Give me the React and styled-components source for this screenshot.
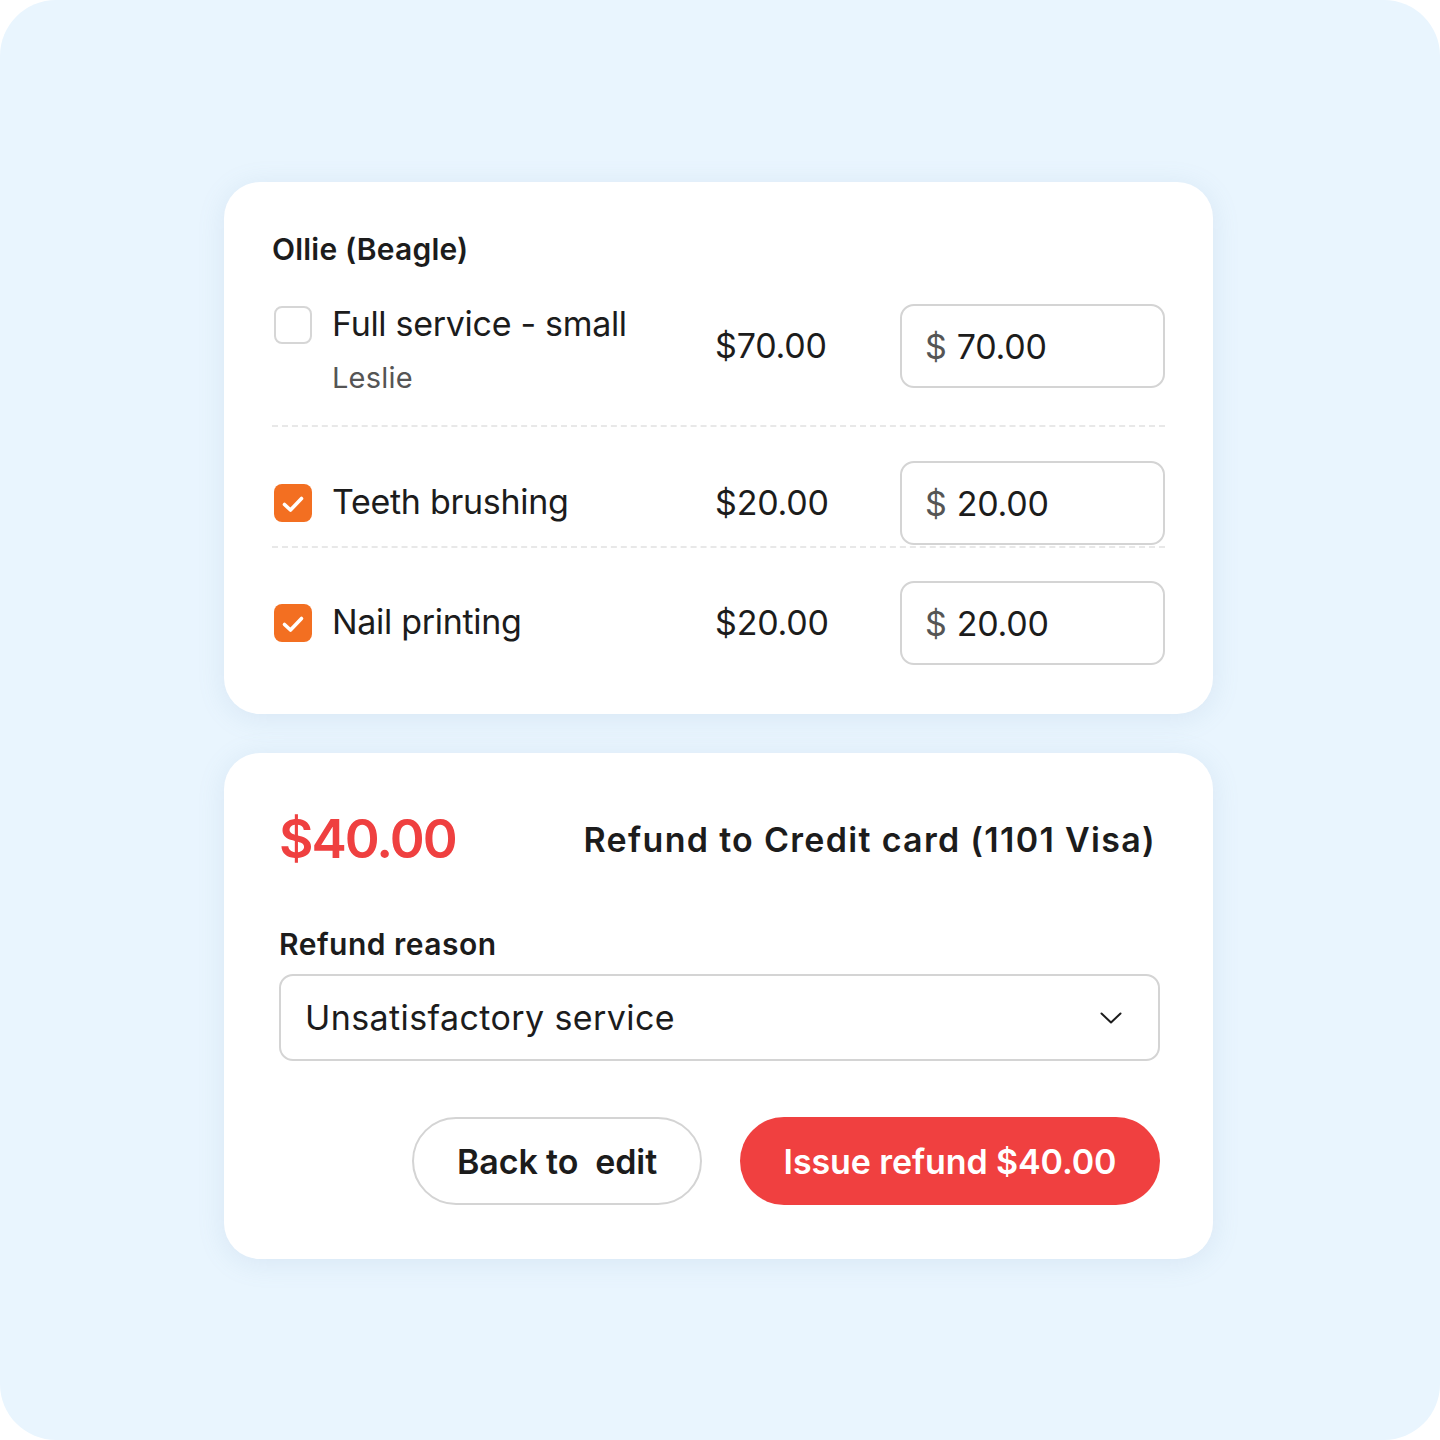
import React, { useState } from "react";
import styled, { createGlobalStyle } from "styled-components";

const GlobalStyle = createGlobalStyle`
  * { box-sizing: border-box; }
  body {
    margin: 0;
    background: #ffffff;
    font-family: Inter, "Noto Sans", sans-serif;
    color: #1c1c1c;
  }
`;

const services = [
  { id: 1, name: "Full service - small", staff: "Leslie", price: "70.00", checked: false },
  { id: 2, name: "Teeth brushing", price: "20.00", checked: true },
  { id: 3, name: "Nail printing", price: "20.00", checked: true },
];

function CheckIcon() {
  return (
    <svg width="38" height="38" viewBox="0 0 38 38" fill="none">
      <path d="M10.5 20.5L16.5 26L27.5 14.5" stroke="#fff" strokeWidth="3.6" strokeLinecap="round" strokeLinejoin="round" />
    </svg>
  );
}

function Chevron() {
  return (
    <svg width="22" height="12" viewBox="0 0 22 12" fill="none">
      <path d="M1.5 1.5L11 10.5L20.5 1.5" stroke="#1c1c1c" strokeWidth="2" strokeLinecap="round" strokeLinejoin="round" />
    </svg>
  );
}

function App() {
  const [items, setItems] = useState(services);
  const toggle = (id) =>
    setItems(items.map((it) => (it.id === id ? { ...it, checked: !it.checked } : it)));

  return (
    <>
      <GlobalStyle />
      <Frame>
        <Card $pad="49px 48px 49px">
          <PetTitle>Ollie (Beagle)</PetTitle>
          {items.map((it, i) => (
            <ServiceRow key={it.id} $first={i === 0} $last={i === items.length - 1}>
              <NameCell $center={!it.staff}>
                <Box $checked={it.checked} onClick={() => toggle(it.id)}>
                  {it.checked && <CheckIcon />}
                </Box>
                <div>
                  <ServiceName>{it.name}</ServiceName>
                  {it.staff && <Staff>{it.staff}</Staff>}
                </div>
              </NameCell>
              <Price>${it.price}</Price>
              <AmountInput>
                <Dollar>$</Dollar>
                <span>{it.price}</span>
              </AmountInput>
            </ServiceRow>
          ))}
        </Card>

        <Card $pad="54px 53px 54px 55px">
          <SummaryRow>
            <Total>$40.00</Total>
            <RefundTo>Refund to Credit card (1101 Visa)</RefundTo>
          </SummaryRow>
          <Label>Refund reason</Label>
          <Select>
            <span>Unsatisfactory service</span>
            <Chevron />
          </Select>
          <Actions>
            <Button>Back to&nbsp; edit</Button>
            <Button $primary>Issue refund $40.00</Button>
          </Actions>
        </Card>
      </Frame>
    </>
  );
}

const Frame = styled.div`
  width: 1440px;
  height: 1440px;
  background: #e9f5fe;
  border-radius: 56px;
  padding: 182px 0 0 224px;
  display: flex;
  flex-direction: column;
  align-items: flex-start;
  gap: 39px;
`;

const Card = styled.div`
  width: 989px;
  background: #ffffff;
  border-radius: 36px;
  padding: ${(p) => p.$pad};
  box-shadow: 0 4px 28px rgba(110, 150, 185, 0.14);
`;

const PetTitle = styled.div`
  font-size: 30px;
  line-height: 36px;
  font-weight: 600;
  letter-spacing: 0.2px;
  margin-bottom: 37px;
`;

const ServiceRow = styled.div`
  display: grid;
  grid-template-columns: 1fr 185px 265px;
  align-items: start;
  padding: ${(p) => (p.$first ? "0 0 30px" : p.$last ? "33px 0 0" : "34px 0 1px")};
  border-top: ${(p) => (p.$first ? "none" : "2px dashed #e8e8e8")};
`;

const NameCell = styled.div`
  display: flex;
  align-items: ${(p) => (p.$center ? "center" : "flex-start")};
  gap: 20px;
  margin-left: 2px;
  min-height: ${(p) => (p.$center ? "84px" : "auto")};
  padding-top: ${(p) => (p.$center ? "0" : "2px")};
`;

const Box = styled.div`
  width: 38px;
  height: 38px;
  flex-shrink: 0;
  border-radius: 8px;
  display: flex;
  align-items: center;
  justify-content: center;
  cursor: pointer;
  background: ${(p) => (p.$checked ? "#f36f21" : "#ffffff")};
  border: ${(p) => (p.$checked ? "none" : "2px solid #d6d6d6")};
`;

const ServiceName = styled.div`
  font-size: 34px;
  line-height: 40px;
  font-weight: 400;
  letter-spacing: -0.3px;
  margin-top: -2px;
`;

const Staff = styled.div`
  font-size: 29px;
  line-height: 34px;
  color: #555555;
  letter-spacing: 0.2px;
  margin-top: 17px;
`;

const Price = styled.div`
  font-size: 34px;
  line-height: 84px;
  letter-spacing: -0.2px;
`;

const AmountInput = styled.div`
  height: 84px;
  border: 2px solid #d4d4d4;
  border-radius: 14px;
  padding-left: 23px;
  display: flex;
  align-items: center;
  gap: 10px;
  font-size: 34px;
  letter-spacing: -0.2px;
`;

const Dollar = styled.span`
  color: #555555;
`;

const SummaryRow = styled.div`
  display: flex;
  justify-content: space-between;
  align-items: center;
  height: 64px;
  margin-bottom: 55px;
`;

const Total = styled.div`
  font-size: 53px;
  font-weight: 600;
  color: #ef4040;
  letter-spacing: -2px;
`;

const RefundTo = styled.div`
  font-size: 34px;
  font-weight: 600;
  letter-spacing: 1.3px;
  margin-right: 4px;
`;

const Label = styled.div`
  font-size: 30px;
  line-height: 36px;
  font-weight: 600;
  letter-spacing: 0.5px;
  margin-bottom: 12px;
`;

const Select = styled.div`
  height: 87px;
  border: 2px solid #d4d4d4;
  border-radius: 14px;
  padding: 0 36px 0 24px;
  display: flex;
  align-items: center;
  justify-content: space-between;
  font-size: 34px;
  letter-spacing: 0.4px;
`;

const Actions = styled.div`
  display: flex;
  justify-content: flex-end;
  gap: 38px;
  margin-top: 56px;
`;

const Button = styled.button`
  height: 88px;
  width: ${(p) => (p.$primary ? "420px" : "290px")};
  border-radius: 44px;
  font-family: inherit;
  font-size: 34px;
  font-weight: 600;
  letter-spacing: -0.1px;
  cursor: pointer;
  color: ${(p) => (p.$primary ? "#ffffff" : "#1c1c1c")};
  background: ${(p) => (p.$primary ? "#f04040" : "#ffffff")};
  border: ${(p) => (p.$primary ? "none" : "2px solid #d4d4d4")};
`;

export default App;
